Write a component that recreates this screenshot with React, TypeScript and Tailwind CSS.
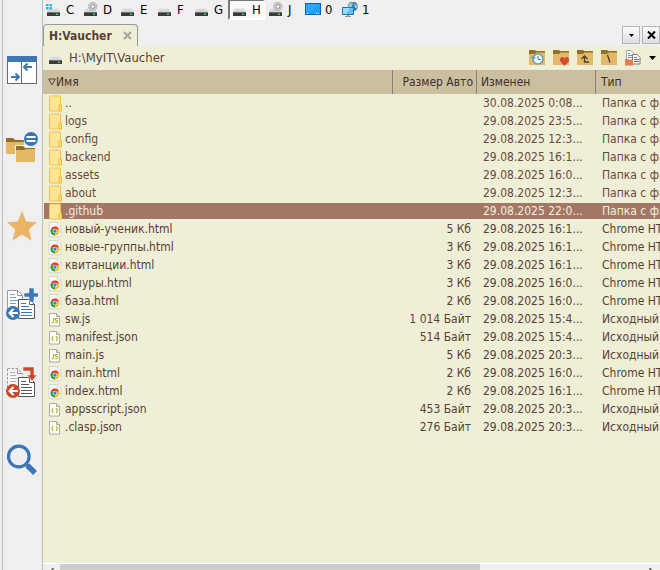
import React from "react";

type Kind = "folder" | "chrome" | "js" | "json";
type Drive = { label: string; kind: "system" | "optical" | "disk" | "desktop" | "network"; active?: boolean };
type Row = { name: string; kind: Kind; size?: string; date: string; type: string; selected?: boolean };

const drives: Drive[] = [
  { label: "C", kind: "system" },
  { label: "D", kind: "optical" },
  { label: "E", kind: "disk" },
  { label: "F", kind: "disk" },
  { label: "G", kind: "disk" },
  { label: "H", kind: "disk", active: true },
  { label: "J", kind: "optical" },
  { label: "0", kind: "desktop" },
  { label: "1", kind: "network" },
];

const DIR = "Папка с файлами";
const HTML = "Chrome HTML Document";
const SRC = "Исходный";

const rows: Row[] = [
  { name: "..", kind: "folder", date: "30.08.2025 0:08...", type: DIR },
  { name: "logs", kind: "folder", date: "29.08.2025 23:5...", type: DIR },
  { name: "config", kind: "folder", date: "29.08.2025 12:3...", type: DIR },
  { name: "backend", kind: "folder", date: "29.08.2025 16:1...", type: DIR },
  { name: "assets", kind: "folder", date: "29.08.2025 16:0...", type: DIR },
  { name: "about", kind: "folder", date: "29.08.2025 12:3...", type: DIR },
  { name: ".github", kind: "folder", date: "29.08.2025 22:0...", type: DIR, selected: true },
  { name: "новый-ученик.html", kind: "chrome", size: "5 Кб", date: "29.08.2025 16:1...", type: HTML },
  { name: "новые-группы.html", kind: "chrome", size: "3 Кб", date: "29.08.2025 16:1...", type: HTML },
  { name: "квитанции.html", kind: "chrome", size: "3 Кб", date: "29.08.2025 16:1...", type: HTML },
  { name: "ишуры.html", kind: "chrome", size: "3 Кб", date: "29.08.2025 16:0...", type: HTML },
  { name: "база.html", kind: "chrome", size: "2 Кб", date: "29.08.2025 16:0...", type: HTML },
  { name: "sw.js", kind: "js", size: "1 014 Байт", date: "29.08.2025 15:4...", type: SRC },
  { name: "manifest.json", kind: "json", size: "514 Байт", date: "29.08.2025 15:4...", type: SRC },
  { name: "main.js", kind: "js", size: "5 Кб", date: "29.08.2025 20:3...", type: SRC },
  { name: "main.html", kind: "chrome", size: "2 Кб", date: "29.08.2025 16:0...", type: HTML },
  { name: "index.html", kind: "chrome", size: "2 Кб", date: "29.08.2025 16:1...", type: HTML },
  { name: "appsscript.json", kind: "json", size: "453 Байт", date: "29.08.2025 20:3...", type: SRC },
  { name: ".clasp.json", kind: "json", size: "276 Байт", date: "29.08.2025 20:3...", type: SRC },
];

function DiskBody() {
  return (
    <>
      <path d="M3 6h8l3 4H1z" fill="#d4d5d8" />
      <path d="M3 6h8l1 1.200H2z" fill="#e9e9eb" />
      <path d="M1 10h13v4H1z" fill="#3a3a3a" />
      <path d="M1 10h13v1H1z" fill="#707070" />
      <rect x="10" y="11.500" width="2" height="1.500" fill="#27e02f" />
    </>
  );
}

function DriveIcon({ kind }: { kind: Drive["kind"] }) {
  return (
    <svg width="16" height="16" viewBox="0 0 16 16" className="block shrink-0" aria-hidden="true">
      {kind === "desktop" && (
        <>
          <rect x=".5" y="1.500" width="15" height="11" fill="#1ba1f8" stroke="#0b62b4" />
          <path d="M1 2h14L3 12H1z" fill="#2aa9fc" />
          <path d="M2 11.500h1M11 11.500h1M13 11.500h1" stroke="#dff2ff" />
        </>
      )}
      {kind === "network" && (
        <>
          <circle cx="10.800" cy="4.500" r="5" fill="#3f80a8" />
          <path d="M7 2c2-2 4-1.500 4-.5s-2 1.500-1 2.500-2 2-4 1zM12 1.500l3 2v3l-2-1z" fill="#9fc8d8" />
          <rect x=".5" y="5.500" width="11" height="7" fill="#5fc0fa" stroke="#2276ac" />
          <path d="M1 6h7l-4 6H1z" fill="#9bdcff" />
          <path d="M5 13h2v1h2v1H3v-1h2z" fill="#8f9ba3" />
        </>
      )}
      {(kind === "system" || kind === "optical" || kind === "disk") && <DiskBody />}
      {kind === "system" && (
        <path d="M0 2h2.500v2H0zM3.500 2H6v2H3.500zM0 5h2.500v2.500H0zM3.500 5H6v2.500H3.500z" fill="#16b5ee" />
      )}
      {kind === "optical" && (
        <>
          <circle cx="9.800" cy="4.500" r="4.200" fill="#cfd1d2" stroke="#a9abad" strokeWidth=".8" />
          <circle cx="9.800" cy="4.500" r="2.200" fill="none" stroke="#9b9da0" />
          <circle cx="9.800" cy="4.500" r="1" fill="#fff" />
        </>
      )}
    </svg>
  );
}

function FileIcon({ kind }: { kind: Kind }) {
  if (kind === "folder") {
    return (
      <svg width="14" height="17" viewBox="0 0 14 17" className="shrink-0" aria-hidden="true">
        <rect x="1.500" y="1" width="11" height="15" rx=".6" fill="#ffe594" stroke="#edc44a" />
        <path d="M11 16v-5.500q0-.7.700-.7h1.800V16z" fill="#ffe07a" stroke="#e9bd3c" />
      </svg>
    );
  }
  return (
    <svg width="14" height="17" viewBox="0 0 14 17" className="shrink-0" aria-hidden="true">
      {kind === "chrome" ? (
        <>
          <path d="M1.500 1.500H9.500l3.500 3.500V15.800H1V2q0-.5.500-.5z" fill="#f8f8f8" stroke="#cdcdc6" strokeWidth=".8" />
          <path d="M9.500 1.500v3.500h3.500" fill="#fff" stroke="#cdcdc6" strokeWidth=".8" />
          <circle cx="7" cy="10" r="4.500" fill="#fcc31e" />
          <path d="M7 10L3.100 7.750A4.500 4.500 0 0 1 10.900 7.750z" fill="#e33b2e" />
          <path d="M7 10L3.100 7.750A4.500 4.500 0 0 0 7 14.500z" fill="#2ba24c" />
          <circle cx="7" cy="10" r="2.200" fill="#fff" />
          <circle cx="7" cy="10" r="1.700" fill="#3b7de8" />
        </>
      ) : (
        <>
          <path d="M1.500 2.500H8.500l3 3v9.500h-10z" fill="#fff" stroke="#a3a396" strokeWidth=".9" />
          <path d="M8.500 2.500v3h3" fill="#d8d8d0" stroke="#a3a396" strokeWidth=".9" />
          {kind === "js" ? (
            <path d="M5.500 7v4q0 .9-2 .8M10 7.500H8.300q-1.600.1-1.300 1 .2.700 1.300.9 1.400.3 1.300 1.200-.1 1.100-1.300 1.200H6.800" fill="none" stroke="#b3ae22" strokeWidth="1.100" />
          ) : (
            <path d="M5.500 7q-1 0-1 1.200l-.7 1.200.7 1.100q0 1.300 1 1.300M7.800 7q1 0 1 1.200l.7 1.200-.7 1.100q0 1.300-1 1.300" fill="none" stroke="#b3ae22" strokeWidth="1.100" />
          )}
        </>
      )}
    </svg>
  );
}

const PanesIcon = () => (
  <svg width="32" height="32" viewBox="0 0 32 32" aria-hidden="true">
    <rect x="1.500" y="2.500" width="29" height="27" fill="#fff" stroke="#6a6a6a" />
    <path d="M1 2h30v6H1z" fill="#3f77b4" />
    <path d="M15.500 8v21" stroke="#6a6a6a" />
    <path d="M26 13h-8M21.500 9.500L18 13l3.500 3.500M5 23h8M9.500 19.500L13 23l-3.500 3.500" fill="none" stroke="#3f77b4" strokeWidth="2" />
  </svg>
);

const CompareIcon = () => (
  <svg width="32" height="32" viewBox="0 0 32 32" aria-hidden="true">
    <path d="M0 6h7l2 2h9v3H0z" fill="#8f6f27" />
    <path d="M0 10h18v12H0z" fill="#e3b866" />
    <path d="M9 13h21v18H9z" fill="#efefef" />
    <path d="M10 14h7l2 2h10v3H10z" fill="#8f6f27" />
    <path d="M10 18h8l2-1h9v13H10z" fill="#e3b866" />
    <circle cx="25" cy="7" r="7.500" fill="#efefef" />
    <circle cx="25" cy="7" r="7" fill="#3b76b5" />
    <path d="M20.500 5h9M20.500 9h9" stroke="#fff" strokeWidth="2" />
  </svg>
);

const StarIcon = () => (
  <svg width="32" height="32" viewBox="0 0 32 32" aria-hidden="true">
    <path d="M16 1l4.200 10.500L31 12.300l-8.200 7.200L25.500 30.500 16 24.500 6.500 30.500l2.700-11L1 12.300l10.800-.8z" fill="#e9b564" />
  </svg>
);

function DocsIcon({ move }: { move?: boolean }) {
  const accent = move ? "#cb482b" : "#3a78b8";
  return (
    <svg width="32" height="32" viewBox="0 0 32 32" aria-hidden="true">
      <path
        d="M1.500 2.500h10l5 5v19h-15z"
        fill={move ? "#f5f5f5" : "#fff"}
        stroke="#9a9a9a"
        strokeDasharray={move ? "2.500 1.500" : undefined}
      />
      <path d="M11.500 2.500v5h5" fill="none" stroke="#9a9a9a" />
      <path d="M4 6.500h5M4 9.500h6M4 12.500h9M4 15.500h6M4 18.500h4" stroke={move ? "#b5b5b5" : "#6aa3d8"} />
      <path d="M12.500 11.500h11l5 5v14h-16z" fill="#fff" stroke="#555" />
      <path d="M23.500 11.500v5h5" fill="none" stroke="#555" />
      <path d="M15 15.500h5M15 18.500h8M15 21.500h11M15 24.500h11M15 27.500h11" stroke={move ? "#555" : "#3a78b8"} />
      {move ? (
        <path d="M17 1h11v8h3l-5 6-5-6h3V5h-7z" fill={accent} stroke="#efefef" strokeWidth=".6" />
      ) : (
        <path d="M23 0h5v5h5v4h-5v5h-5V9h-5V5h5z" fill={accent} stroke="#efefef" strokeWidth=".6" />
      )}
      <circle cx="7" cy="25" r="7" fill={accent} />
      <path d="M12 25H4M7.500 21L3.500 25l4 4" fill="none" stroke="#fff" strokeWidth="2" />
    </svg>
  );
}

const SearchIcon = () => (
  <svg width="32" height="32" viewBox="0 0 32 32" aria-hidden="true">
    <circle cx="12.800" cy="12.500" r="10.300" fill="none" stroke="#3b76b5" strokeWidth="3.200" />
    <path d="M19.500 19.500l3 3" stroke="#3b76b5" strokeWidth="3.500" />
    <path d="M21.500 21.500L29 29" stroke="#3b76b5" strokeWidth="5.500" />
  </svg>
);

const tools = [
  { label: "Панели", icon: <PanesIcon /> },
  { label: "Сравнить папки", icon: <CompareIcon /> },
  { label: "Избранное", icon: <StarIcon /> },
  { label: "Копировать", icon: <DocsIcon /> },
  { label: "Переместить", icon: <DocsIcon move /> },
  { label: "Поиск", icon: <SearchIcon /> },
];

function FolderButton({ label, children }: { label: string; children: React.ReactNode }) {
  return (
    <button type="button" aria-label={label} className="shrink-0">
      <svg width="16" height="16" viewBox="0 0 16 16" className="block" aria-hidden="true">
        <path d="M0 0h6l1 1h9v4H0z" fill="#8f7027" />
        <path d="M0 4h6l1.500-1.500H16V15H0z" fill="#e3b866" />
        {children}
      </svg>
    </button>
  );
}

export default function App() {
  return (
    <div className="flex h-screen overflow-hidden bg-[#efefef] font-['DejaVu_Sans_Condensed','DejaVu_Sans',sans-serif] text-[12px] leading-[18px] text-[#583f35]">
      <nav className="ml-[2px] flex w-[41px] shrink-0 flex-col border-x border-[#bdbdbd] pt-[31px]">
        {tools.map((t) => (
          <button key={t.label} type="button" aria-label={t.label} className="flex h-[78px] shrink-0 items-center pl-[3px]">
            {t.icon}
          </button>
        ))}
      </nav>

      <main className="flex min-w-0 flex-1 flex-col">
        <div className="flex h-[20px] shrink-0 text-[13px] text-black">
          {drives.map((d) => (
            <button
              key={d.label}
              type="button"
              className={
                d.active
                  ? "flex w-[37px] items-center gap-1 border-2 border-t border-[#fdfdfd] border-t-[#777] border-l-[#777] bg-[#f9f9f9] pl-[2px]"
                  : "flex w-[37px] items-center gap-1 pl-[3px]"
              }
            >
              <DriveIcon kind={d.kind} />
              <span>{d.label}</span>
            </button>
          ))}
        </div>

        <div className="flex h-[26px] shrink-0 items-end justify-between">
          <div className="flex h-[22px] w-[95px] items-center justify-between rounded-t border border-b-0 border-[#999] bg-[#efefd8] pr-[5px] pl-[5px] font-bold">
            <span>H:Vaucher</span>
            <button type="button" aria-label="Закрыть вкладку">
              <svg width="9" height="9" viewBox="0 0 9 9" className="block" aria-hidden="true">
                <path d="M1 1l7 7M8 1L1 8" stroke="#a5a5a0" strokeWidth="2" />
              </svg>
            </button>
          </div>
          <div className="mb-[2px] flex gap-[2px]">
            <button type="button" aria-label="Список вкладок" className="flex size-[18px] items-center justify-center border border-[#b5b5b5] bg-linear-to-b from-[#fcfcfc] to-[#dedede]">
              <svg width="5" height="3" viewBox="0 0 5 3" aria-hidden="true">
                <path d="M0 0h5L2.500 3z" fill="#000" />
              </svg>
            </button>
            <button type="button" aria-label="Закрыть" className="flex size-[18px] items-center justify-center border border-[#b5b5b5] bg-linear-to-b from-[#fcfcfc] to-[#dedede]">
              <svg width="9" height="8" viewBox="0 0 9 8" aria-hidden="true">
                <path d="M1 .5l7 7M8 .5l-7 7" stroke="#000" strokeWidth="2" />
              </svg>
            </button>
          </div>
        </div>

        <div className="flex h-[24px] shrink-0 items-center gap-[5px] bg-[#efefd8] pr-1 pl-[5px]">
          <DriveIcon kind="disk" />
          <span className="flex-1 text-[13px]">H:\MyIT\Vaucher</span>
          <div className="flex items-center gap-2">
            <FolderButton label="История">
              <circle cx="9" cy="9" r="5" fill="#f4f8f8" stroke="#5fa3b8" strokeWidth="1.600" />
              <path d="M9 6v3.500h2.500" fill="none" stroke="#3f7f99" />
              <path d="M2 6.500l2.200 3.500L7 7z" fill="#5fa3b8" />
            </FolderButton>
            <FolderButton label="Любимые папки">
              <path d="M11.500 16L7.300 11.500q-1.200-3.200 1-4.300 2.200-.7 3.200 1.300 1.100-2 3.200-1.300 2.200 1.200 1 4.300z" fill="#d14b33" />
            </FolderButton>
            <FolderButton label="Вверх">
              <path d="M7.500 6v6H12M4.500 9l3-3 3 3" fill="none" stroke="#4c4030" strokeWidth="1.300" />
            </FolderButton>
            <FolderButton label="Корень">
              <path d="M6.500 5l2.500 7.500" stroke="#4c4030" strokeWidth="1.300" />
            </FolderButton>
            <button type="button" aria-label="Операции с файлами" className="flex items-center gap-2">
              <svg width="16" height="16" viewBox="0 0 16 16" aria-hidden="true">
                <path d="M1.500.5H6l2.500 2.500V10h-7z" fill="#fff" stroke="#a5a5a5" />
                <path d="M3 3.500h2M3 5.500h4M3 7.500h4" stroke="#5b94cc" />
                <path d="M7.500 4.500H12l3 3v6.500H7.500z" fill="#fff" stroke="#777" />
                <path d="M9 7.500h3M9 9.500h5M9 11.500h5" stroke="#3f77b4" />
                <path d="M0 9h3l1 1h4v5.500H0z" fill="#e27f52" />
              </svg>
              <svg width="7" height="4" viewBox="0 0 7 4" aria-hidden="true">
                <path d="M0 0h7L3.500 4z" fill="#000" />
              </svg>
            </button>
          </div>
        </div>

        <div className="min-h-0 flex-1 overflow-hidden border-b border-white bg-[#efefd8]">
          <table className="w-full table-fixed border-separate border-spacing-0">
            <thead className="bg-[#cac0a0] text-left text-[#403028]">
              <tr className="h-[24px]">
                <th className="border-r border-[#8e7d72] p-0 pl-[5px] font-normal">
                  <span className="flex items-center">
                    <svg width="8" height="8" viewBox="0 0 8 8" aria-hidden="true">
                      <path d="M.7 1h6.600L4 7z" fill="none" stroke="#4e4038" />
                    </svg>
                    Имя
                  </span>
                </th>
                <th className="w-[84px] border-r border-[#8e7d72] p-0 pr-[3px] text-right font-normal whitespace-nowrap">Размер Авто</th>
                <th className="w-[119px] border-r border-[#8e7d72] p-0 pl-1 font-normal">Изменен</th>
                <th className="w-[64px] p-0 pl-[5px] font-normal">Тип</th>
              </tr>
            </thead>
            <tbody>
              {rows.map((r) => (
                <tr
                  key={r.name}
                  className={
                    r.selected
                      ? "h-[18px] bg-[#a27766] text-[#f3eedb] shadow-[inset_1px_1px_#efefd8,inset_0_-1px_#efefd8]"
                      : r.kind === "folder"
                        ? "h-[18px] text-[#6b4838]"
                        : "h-[18px]"
                  }
                >
                  <td className="p-0 pl-[5px]">
                    <span className="flex h-[18px] items-center gap-[3px]">
                      <FileIcon kind={r.kind} />
                      {r.name}
                    </span>
                  </td>
                  <td className="p-0 pr-[6px] text-right whitespace-nowrap">{r.size}</td>
                  <td className="p-0 pl-[6px] whitespace-nowrap">{r.date}</td>
                  <td className="overflow-hidden p-0 pl-[6px] whitespace-nowrap">{r.type}</td>
                </tr>
              ))}
            </tbody>
          </table>
        </div>

        <div className="flex h-[6px] shrink-0 items-start overflow-hidden">
          <button type="button" aria-label="Прокрутить влево" className="flex h-[17px] w-[17px] shrink-0 items-center justify-center">
            <svg width="5" height="9" viewBox="0 0 5 9" aria-hidden="true">
              <path d="M4.500 0L.8 4.500l3.700 4" fill="none" stroke="#555" strokeWidth="1.600" />
            </svg>
          </button>
          <div className="h-[17px] min-w-0 flex-1">
            <div className="h-full w-[72%] bg-[#cdcdcd]" />
          </div>
          <button type="button" aria-label="Прокрутить вправо" className="flex h-[17px] w-[17px] shrink-0 items-center justify-center">
            <svg width="5" height="9" viewBox="0 0 5 9" aria-hidden="true">
              <path d="M.5 0l3.700 4.500-3.700 4" fill="none" stroke="#555" strokeWidth="1.600" />
            </svg>
          </button>
        </div>
      </main>
    </div>
  );
}
